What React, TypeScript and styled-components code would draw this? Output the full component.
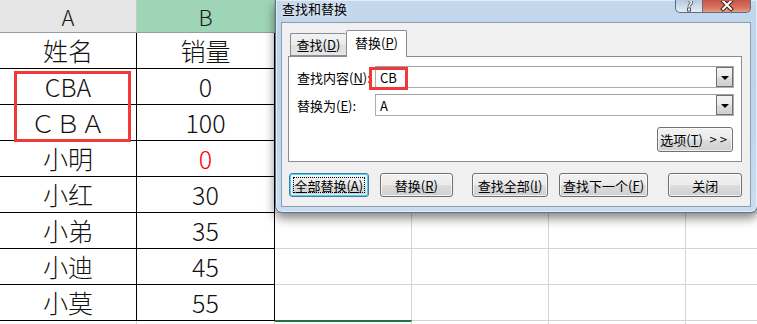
import React from 'react';
import styled, { createGlobalStyle, css } from 'styled-components';

const GlobalStyle = createGlobalStyle`
  html, body {
    margin: 0;
    padding: 0;
    background: #fff;
  }
  body {
    font-family: "Noto Sans CJK SC", "Noto Sans", sans-serif;
  }
`;

const Stage = styled.div`
  position: relative;
  width: 757px;
  height: 324px;
  overflow: hidden;
  background: #fff;
`;

// ---------- spreadsheet ----------

const Sheet = styled.div`
  display: grid;
  grid-template-columns: 137px 138px 137px 137px 137px 171px;
  grid-template-rows: 33px repeat(9, 36px);
`;

const HeadCell = styled.div<{ $selected?: boolean }>`
  box-sizing: border-box;
  display: flex;
  align-items: center;
  justify-content: center;
  font-size: 22px;
  font-weight: 300;
  color: #1a1a1a;
  background: ${(p) => (p.$selected ? '#9fd5b7' : '#e6e6e6')};
  border-right: 1px solid ${(p) => (p.$selected ? '#8cc4a5' : '#c6c6c6')};
  border-bottom: 1px solid #9b9b9b;
`;

const Cell = styled.div<{ $table?: boolean; $red?: boolean; $selected?: boolean }>`
  box-sizing: border-box;
  display: flex;
  align-items: center;
  justify-content: center;
  font-size: 25px;
  font-weight: 300;
  line-height: 1;
  color: ${(p) => (p.$red ? '#ff0000' : '#111')};
  border-right: 1px solid ${(p) => (p.$table ? '#000' : '#d4d4d4')};
  border-bottom: 1px solid ${(p) => (p.$table ? '#000' : '#d4d4d4')};
  ${(p) =>
    p.$selected &&
    css`
      border-top: 2px solid #217346;
      margin-top: -1px;
    `}
`;

const Mark = styled.div`
  position: absolute;
  box-sizing: border-box;
  border: 3px solid #f03a3a;
  pointer-events: none;
`;

// ---------- dialog window ----------

const Window = styled.div`
  position: absolute;
  left: 275px;
  top: 0;
  width: 483px;
  box-sizing: border-box;
  padding: 0 6px 5px 5px;
  border: 1px solid #5e7289;
  border-top: none;
  border-radius: 0 0 7px 7px;
  background: linear-gradient(180deg, #c3d8ed 0%, #bcd3ea 40%, #c9ddf2 100%);
  box-shadow: 0 5px 11px rgba(0, 0, 0, 0.5), inset 0 0 0 1px rgba(255, 255, 255, 0.55);
  font-size: 13px;
  color: #000;
`;

const TitleBar = styled.div`
  height: 22px;
  display: flex;
  justify-content: space-between;
  align-items: flex-start;
`;

const Title = styled.div`
  padding: 0 0 0 1px;
  font-size: 13px;
  line-height: 17px;
  color: #000;
  text-shadow: 0 0 6px rgba(255, 255, 255, 0.9);
`;

const Caption = styled.div`
  display: flex;
  margin-right: 0;
`;

const CaptionButton = styled.div<{ $close?: boolean }>`
  box-sizing: border-box;
  height: 13px;
  width: ${(p) => (p.$close ? '48px' : '28px')};
  display: flex;
  align-items: flex-end;
  justify-content: center;
  border: 1px solid #5d6e82;
  border-top: none;
  overflow: hidden;
  ${(p) =>
    p.$close
      ? css`
          border-left: none;
          border-radius: 0 0 5px 0;
          background: linear-gradient(180deg, #c5574a 0%, #d7705e 60%, #e79b7f 100%);
        `
      : css`
          border-radius: 0 0 0 5px;
          background: linear-gradient(180deg, #b8c9dc 0%, #d2dfec 60%, #e3ecf5 100%);
        `}
`;

const CloseX = () => (
  <svg width="14" height="11" viewBox="0 0 14 11">
    <path d="M3 0 L11 8 M11 0 L3 8" stroke="#3a2320" strokeWidth="4" strokeLinecap="square" />
    <path d="M3 0 L11 8 M11 0 L3 8" stroke="#fff" strokeWidth="2" strokeLinecap="square" />
  </svg>
);

const HelpMark = () => (
  <svg width="10" height="11" viewBox="0 0 10 11">
    <path d="M2.5 0.5 C3 -1 7.5 -1 7.5 1.5 C7.5 3.5 5 3.5 5 5.5" stroke="#4a5563" strokeWidth="3" fill="none" />
    <path d="M2.5 0.5 C3 -1 7.5 -1 7.5 1.5 C7.5 3.5 5 3.5 5 5.5" stroke="#fff" strokeWidth="1.4" fill="none" />
    <rect x="3.5" y="7" width="3" height="3" fill="#fff" stroke="#4a5563" strokeWidth="1" />
  </svg>
);

const Client = styled.div`
  box-sizing: border-box;
  background: #f0f0f0;
  border: 1px solid #8c9db1;
  padding: 0 8px 9px 6px;
`;

const TabStrip = styled.div`
  height: 33px;
  display: flex;
  align-items: flex-end;
  padding-left: 2px;
`;

const Tab = styled.div<{ $active?: boolean }>`
  box-sizing: border-box;
  position: relative;
  display: flex;
  align-items: center;
  justify-content: center;
  border: 1px solid #898c95;
  border-radius: 2px 2px 0 0;
  white-space: nowrap;
  ${(p) =>
    p.$active
      ? css`
          width: 61px;
          height: 27px;
          margin-bottom: -1px;
          border-bottom: none;
          background: #fff;
          z-index: 1;
          padding-bottom: 3px;
        `
      : css`
          width: 56px;
          height: 23px;
          border-right: none;
          background: linear-gradient(180deg, #f3f3f3 0%, #ebebeb 50%, #dedede 51%, #e6e6e6 100%);
        `}
`;

const Panel = styled.div`
  box-sizing: border-box;
  height: 106px;
  background: #fff;
  border: 1px solid #898c95;
  padding: 9px 7px 9px 8px;
  display: flex;
  flex-direction: column;
`;

const FieldRow = styled.div<{ $gap?: number }>`
  display: flex;
  align-items: center;
  margin-top: ${(p) => p.$gap ?? 0}px;
`;

const Label = styled.div`
  width: 78px;
  flex: none;
  white-space: nowrap;
`;

const Combo = styled.div`
  position: relative;
  flex: 1;
  box-sizing: border-box;
  height: 22px;
  border: 1px solid #abadb3;
  border-top-color: #9ea0a6;
  background: #fff;
  display: flex;
  align-items: center;
  padding-left: 4px;
`;

const ComboText = styled.span`
  flex: 1;
  font-size: 13px;
`;

const DropButton = styled.div`
  box-sizing: border-box;
  width: 17px;
  height: 20px;
  border: 1px solid #707070;
  background: linear-gradient(180deg, #f2f2f2 0%, #ebebeb 50%, #dddddd 51%, #cfcfcf 100%);
  display: flex;
  align-items: center;
  justify-content: center;
`;

const Arrow = styled.div`
  width: 0;
  height: 0;
  border-left: 4px solid transparent;
  border-right: 4px solid transparent;
  border-top: 4px solid #000;
  margin-top: 2px;
`;

const OptionsRow = styled.div`
  display: flex;
  justify-content: flex-end;
  margin-top: 11px;
  padding-right: 1px;
`;

const ButtonRow = styled.div`
  display: flex;
  margin-top: 11px;
  padding-left: 1px;
`;

const Button = styled.div<{ $w: number; $h?: number; $ml?: number; $focused?: boolean }>`
  position: relative;
  box-sizing: border-box;
  width: ${(p) => p.$w}px;
  height: ${(p) => p.$h ?? 24}px;
  margin-left: ${(p) => p.$ml ?? 0}px;
  display: flex;
  align-items: center;
  justify-content: center;
  white-space: nowrap;
  border: 1px solid #707070;
  border-radius: 3px;
  background: linear-gradient(180deg, #f2f2f2 0%, #ebebeb 48%, #dddddd 52%, #cfcfcf 100%);
  box-shadow: inset 0 0 0 1px rgba(255, 255, 255, 0.7);
  ${(p) =>
    p.$focused &&
    css`
      border-color: #3c7fb1;
      box-shadow: inset 0 0 0 1px #48d0f8, inset 0 0 0 2px rgba(255, 255, 255, 0.5);
      &::after {
        content: '';
        position: absolute;
        inset: 3px;
        border: 1px dotted #000;
      }
    `}
`;

const Chevrons = styled.span`
  font-family: "DejaVu Sans", sans-serif;
  font-size: 10px;
  margin-left: 6px;
  letter-spacing: 2px;
`;

const rows: { name: string; sales: string; red?: boolean }[] = [
  { name: '姓名', sales: '销量' },
  { name: 'CBA', sales: '0' },
  { name: 'ＣＢＡ', sales: '100' },
  { name: '小明', sales: '0', red: true },
  { name: '小红', sales: '30' },
  { name: '小弟', sales: '35' },
  { name: '小迪', sales: '45' },
  { name: '小莫', sales: '55' },
];

const Spreadsheet: React.FC = () => (
  <Sheet>
    <HeadCell>A</HeadCell>
    <HeadCell $selected>B</HeadCell>
    {/* C..F headers sit under the dialog */}
    <HeadCell />
    <HeadCell />
    <HeadCell />
    <HeadCell />
    {rows.map((r, i) => (
      <React.Fragment key={i}>
        <Cell $table>{r.name}</Cell>
        <Cell $table $red={r.red}>
          {r.sales}
        </Cell>
        <Cell />
        <Cell />
        <Cell />
        <Cell />
      </React.Fragment>
    ))}
    <Cell />
    <Cell />
    <Cell $selected />
    <Cell />
    <Cell />
    <Cell />
  </Sheet>
);

const FindReplaceDialog: React.FC = () => (
  <Window>
    <TitleBar>
      <Title>查找和替换</Title>
      <Caption>
        <CaptionButton>
          <HelpMark />
        </CaptionButton>
        <CaptionButton $close>
          <CloseX />
        </CaptionButton>
      </Caption>
    </TitleBar>

    <Client>
      <TabStrip>
        <Tab>
          查找(<u>D</u>)
        </Tab>
        <Tab $active>
          替换(<u>P</u>)
        </Tab>
      </TabStrip>

      <Panel>
        <FieldRow>
          <Label>
            查找内容(<u>N</u>):
          </Label>
          <Combo>
            <ComboText>CB</ComboText>
            <DropButton>
              <Arrow />
            </DropButton>
            <Mark style={{ left: -7, top: 0, width: 39, height: 23 }} />
          </Combo>
        </FieldRow>
        <FieldRow $gap={6}>
          <Label>
            替换为(<u>E</u>):
          </Label>
          <Combo>
            <ComboText>A</ComboText>
            <DropButton>
              <Arrow />
            </DropButton>
          </Combo>
        </FieldRow>
        <OptionsRow>
          <Button $w={76} $h={25}>
            选项(<u>T</u>)<Chevrons>&gt;&gt;</Chevrons>
          </Button>
        </OptionsRow>
      </Panel>

      <ButtonRow>
        <Button $w={80} $focused>
          全部替换(<u>A</u>)
        </Button>
        <Button $w={74} $ml={11}>
          替换(<u>R</u>)
        </Button>
        <Button $w={76} $ml={19}>
          查找全部(<u>I</u>)
        </Button>
        <Button $w={90} $ml={11}>
          查找下一个(<u>F</u>)
        </Button>
        <Button $w={74} $ml={20}>
          关闭
        </Button>
      </ButtonRow>
    </Client>
  </Window>
);

export default function App() {
  return (
    <>
      <GlobalStyle />
      <Stage>
        <Spreadsheet />
        <Mark style={{ left: 14, top: 71, width: 117, height: 71 }} />
        <FindReplaceDialog />
      </Stage>
    </>
  );
}
